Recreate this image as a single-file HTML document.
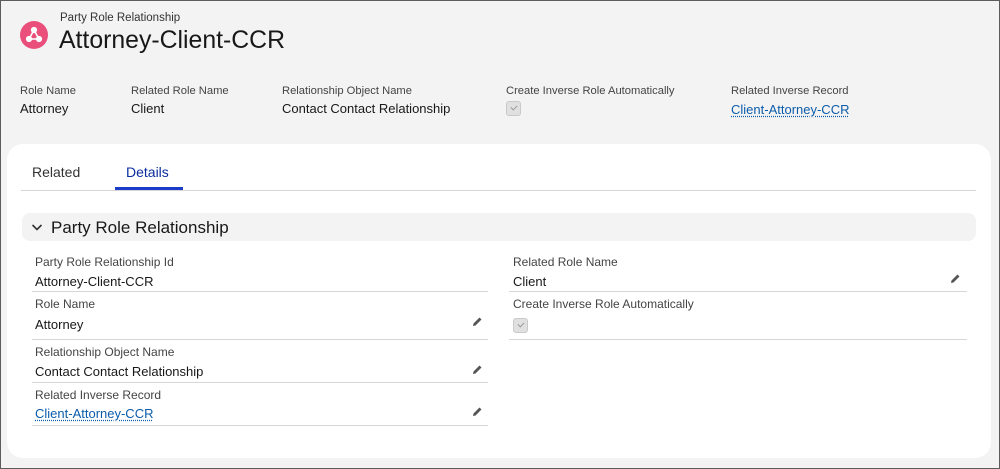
<!DOCTYPE html>
<html><head><style>
*{box-sizing:border-box;margin:0;padding:0}
body{width:1000px;height:469px;overflow:hidden;background:#f3f3f3;font-family:"Liberation Sans",sans-serif;color:#181818;position:relative}
.frame{position:absolute;left:0;top:0;width:1000px;height:469px;border:1px solid #5c5c5c;z-index:5;pointer-events:none}
.a{position:absolute;white-space:nowrap}
.lbl{font-size:11.2px;color:#444}
.flbl{font-size:12px;color:#444}
.val{font-size:13px;color:#181818}
.link{color:#0b5cab;text-decoration:underline dotted;text-underline-offset:2px}
.card{position:absolute;left:7px;top:144px;width:984px;height:314px;background:#fff;border-radius:16px}
.cb{position:absolute;width:15px;height:15px;border:1px solid #c9c9c9;background:#e0e0e0;border-radius:3px}
.cb:after{content:"";position:absolute;left:4px;top:3px;width:5px;height:3px;border-left:1.3px solid #999;border-bottom:1.3px solid #999;transform:rotate(-45deg)}
.line{position:absolute;height:1px;background:#d6d6d6}
.pen{position:absolute;width:12px;height:12px}
</style></head><body>
<div class="frame"></div>
<svg class="a" style="left:20px;top:21px" width="28" height="28" viewBox="0 0 28 28"><circle cx="14" cy="14" r="14" fill="#ea4f7c"/><g stroke="#fff" stroke-width="1.6" fill="#fff"><line x1="14" y1="9" x2="9" y2="18"/><line x1="14" y1="9" x2="19" y2="18"/><line x1="9" y1="18" x2="19" y2="18"/><circle cx="14" cy="9" r="2.3"/><circle cx="9" cy="18" r="2.3"/><circle cx="19" cy="18" r="2.3"/></g></svg>
<div class="a" style="left:60px;top:12px;font-size:11.5px;color:#333">Party Role Relationship</div>
<div class="a" style="left:59px;top:27px;font-size:24.8px;color:#181818">Attorney-Client-CCR</div>

<div class="a lbl" style="left:20px;top:85px">Role Name</div>
<div class="a val" style="left:20px;top:101px">Attorney</div>
<div class="a lbl" style="left:131px;top:85px">Related Role Name</div>
<div class="a val" style="left:131px;top:101px">Client</div>
<div class="a lbl" style="left:282px;top:85px">Relationship Object Name</div>
<div class="a val" style="left:282px;top:101px">Contact Contact Relationship</div>
<div class="a lbl" style="left:506px;top:85px">Create Inverse Role Automatically</div>
<div class="cb" style="left:506px;top:101px"></div>
<div class="a lbl" style="left:731px;top:85px">Related Inverse Record</div>
<div class="a val link" style="left:731px;top:102px">Client-Attorney-CCR</div>

<div class="card"></div>
<div class="a" style="left:32px;top:164px;font-size:14px;color:#333">Related</div>
<div class="a" style="left:126px;top:164px;font-size:14px;color:#0b2d9e">Details</div>
<div class="a" style="left:115px;top:187px;width:68px;height:3px;background:#1b3cc8"></div>
<div class="line" style="left:21px;top:190px;width:955px"></div>

<div class="a" style="left:22px;top:213px;width:954px;height:28px;background:#f3f3f3;border-radius:8px"></div>
<svg class="a" style="left:31px;top:223px" width="12" height="9" viewBox="0 0 12 9"><path d="M1.5 2l4.5 4.5 4.5-4.5" stroke="#333" stroke-width="1.6" fill="none"/></svg>
<div class="a" style="left:51px;top:218px;font-size:17px;color:#181818">Party Role Relationship</div>

<div class="a flbl" style="left:35px;top:255px">Party Role Relationship Id</div>
<div class="a val" style="left:35px;top:274px">Attorney-Client-CCR</div>
<div class="line" style="left:32px;top:291px;width:456px"></div>
<div class="a flbl" style="left:35px;top:297px">Role Name</div>
<div class="a val" style="left:35px;top:317px">Attorney</div>
<div class="line" style="left:32px;top:339px;width:456px"></div>
<div class="a flbl" style="left:35px;top:345px">Relationship Object Name</div>
<div class="a val" style="left:35px;top:364px">Contact Contact Relationship</div>
<div class="line" style="left:32px;top:382px;width:456px"></div>
<div class="a flbl" style="left:35px;top:388px">Related Inverse Record</div>
<div class="a val link" style="left:35px;top:406px">Client-Attorney-CCR</div>
<div class="line" style="left:32px;top:425px;width:456px"></div>

<div class="a flbl" style="left:513px;top:255px">Related Role Name</div>
<div class="a val" style="left:513px;top:274px">Client</div>
<div class="line" style="left:509px;top:291px;width:458px"></div>
<div class="a flbl" style="left:513px;top:297px">Create Inverse Role Automatically</div>
<div class="cb" style="left:513px;top:318px"></div>
<div class="line" style="left:509px;top:339px;width:458px"></div>

<svg class="pen" style="left:471px;top:316px" viewBox="0 0 12 12"><path d="M2 10l.5-2.5 6-6 2 2-6 6z" fill="#555"/></svg>
<svg class="pen" style="left:471px;top:364px" viewBox="0 0 12 12"><path d="M2 10l.5-2.5 6-6 2 2-6 6z" fill="#555"/></svg>
<svg class="pen" style="left:471px;top:406px" viewBox="0 0 12 12"><path d="M2 10l.5-2.5 6-6 2 2-6 6z" fill="#555"/></svg>
<svg class="pen" style="left:949px;top:273px" viewBox="0 0 12 12"><path d="M2 10l.5-2.5 6-6 2 2-6 6z" fill="#555"/></svg>
</body></html>
